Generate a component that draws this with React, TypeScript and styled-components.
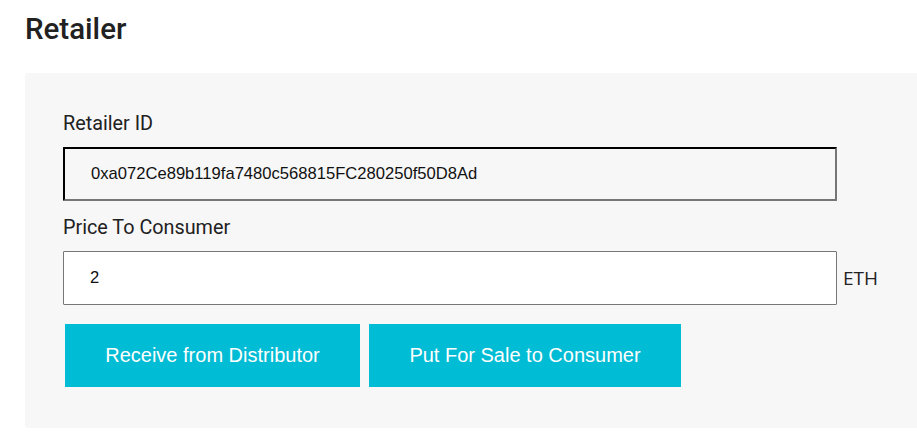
import React from "react";
import styled, { createGlobalStyle } from "styled-components";

const GlobalStyle = createGlobalStyle`
  body {
    margin: 0;
    background: #fff;
    font-family: Roboto, "Liberation Sans", sans-serif;
    color: #222;
  }
`;

const Page = styled.div`
  width: 917px;
  height: 448px;
  overflow: hidden;
`;

const Title = styled.h2`
  margin: 0;
  padding: 11px 0 0 25px;
  font-family: Roboto, sans-serif;
  font-weight: 500;
  font-size: 29.5px;
  line-height: 36px;
  color: #212121;
`;

const Panel = styled.section`
  margin: 26px 0 0 25px;
  padding: 40px 0 41px 38px;
  background: #f7f7f7;
  border-radius: 3px 0 0 3px;
  display: flex;
  flex-direction: column;
`;

const Label = styled.label`
  font-family: Roboto, sans-serif;
  font-size: 19.8px;
  line-height: 22px;
  color: #212121;
  margin-bottom: 12px;
`;

const Row = styled.div`
  display: flex;
  align-items: center;
  gap: 6px;
`;

const Field = styled.input<{ $readOnlyLook?: boolean }>`
  box-sizing: border-box;
  width: 774px;
  height: 54px;
  padding: 0 0 0 26px;
  font-family: "Liberation Sans", Arial, sans-serif;
  font-size: 16.6px;
  color: #111;
  outline: none;
  background: ${(p) => (p.$readOnlyLook ? "#f7f7f7" : "#fff")};
  border: ${(p) => (p.$readOnlyLook ? "2px inset #767676" : "1px solid #767676")};
  border-top-color: ${(p) => (p.$readOnlyLook ? "#1f1f1f" : "#767676")};
  border-left-color: ${(p) => (p.$readOnlyLook ? "#1f1f1f" : "#767676")};
  border-radius: 1px;
`;

const Unit = styled.span`
  font-family: "Open Sans", sans-serif;
  font-size: 19px;
  color: #222;
`;

const Spacer = styled.div<{ $h: number }>`
  height: ${(p) => p.$h}px;
`;

const Actions = styled.div`
  display: flex;
  gap: 9px;
  margin: 19px 0 0 2px;
`;

const ActionButton = styled.button<{ $w: number }>`
  width: ${(p) => p.$w}px;
  height: 63px;
  border: none;
  background: #00bcd4;
  color: #fff;
  font-family: "Liberation Sans", Arial, sans-serif;
  font-size: 20px;
  cursor: pointer;
`;

export default function App() {
  return (
    <Page>
      <GlobalStyle />
      <Title>Retailer</Title>
      <Panel>
        <Label>Retailer ID</Label>
        <Field
          $readOnlyLook
          readOnly
          value="0xa072Ce89b119fa7480c568815FC280250f50D8Ad"
        />
        <Spacer $h={16} />
        <Label>Price To Consumer</Label>
        <Row>
          <Field defaultValue="2" />
          <Unit>ETH</Unit>
        </Row>
        <Actions>
          <ActionButton $w={295}>Receive from Distributor</ActionButton>
          <ActionButton $w={312}>Put For Sale to Consumer</ActionButton>
        </Actions>
      </Panel>
    </Page>
  );
}
